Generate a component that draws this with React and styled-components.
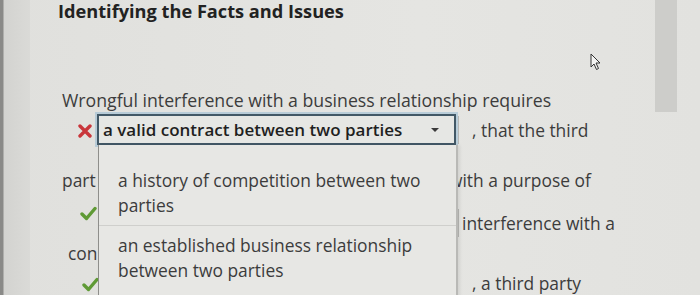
import React from 'react'
import styled, { createGlobalStyle } from 'styled-components'

const Global = createGlobalStyle`
    body {
        margin: 0;
        background: #e3e3e0;
        font-family: "Open Sans", "Liberation Sans", sans-serif;
    }
`;

export default function App() {
    return (
        <Screen>
            <Global />
            <Bezel />
            <Main>
                <Title>Identifying the Facts and Issues</Title>
                <Question>Wrongful interference with a business relationship requires</Question>
                <AnswerRow>
                    <Mark>
                        <svg width="14" height="14" viewBox="0 0 14 14">
                            <path d="M2 2 L12 12 M12 2 L2 12" stroke="#c9363b" strokeWidth="3.4" strokeLinecap="round" />
                        </svg>
                    </Mark>
                    <SelectWrap>
                        <SelectBox>
                            a valid contract between two parties
                            <Caret />
                        </SelectBox>
                        <Options>
                            <Option>a history of competition between two parties</Option>
                            <Option>an established business relationship between two parties</Option>
                        </Options>
                    </SelectWrap>
                    <Stub />
                    <Tail>, that the third</Tail>
                </AnswerRow>
                <Below>
                    <LeftCol>
                        <Word>part</Word>
                        <Check $left={18} $top={13} />
                        <Word $left={6} $top={20}>con</Word>
                        <Check $left={20} $top={11} />
                    </LeftCol>
                    <RightCol>
                        <Word>with a purpose of</Word>
                        <Blank $top={16}>
                            <Stub />
                            interference with a
                        </Blank>
                        <Word $left={23} $top={34}>, a third party</Word>
                    </RightCol>
                </Below>
                <Cursor>
                    <svg width="11" height="18" viewBox="0 0 11 18">
                        <path d="M1 1 L1 14 L4 11 L6.5 16.5 L8.5 15.5 L6 10 L10 10 Z" fill="#f4f4f2" stroke="#333" strokeWidth="1" strokeLinejoin="round" />
                    </svg>
                </Cursor>
            </Main>
            <ScrollTrack>
                <Thumb />
            </ScrollTrack>
        </Screen>
    )
}

function Check({ $left, $top }) {
    return (
        <CheckBox $left={$left} $top={$top}>
            <svg width="17" height="15" viewBox="0 0 17 15">
                <path d="M2 8 L6.5 12.5 L15 2.5" fill="none" stroke="#5f9a35" strokeWidth="3.4" strokeLinecap="round" strokeLinejoin="round" />
            </svg>
        </CheckBox>
    )
}

const Screen = styled.div`
    width: 700px;
    height: 295px;
    overflow: hidden;
    display: flex;
    background: linear-gradient(to right, #e0e0dd, #e5e5e2 60%, #e2e2df);
`;

const Bezel = styled.div`
    width: 30px;
    flex-shrink: 0;
    background: linear-gradient(to right, #8a8a88 0, #8a8a88 3px, #d3d3d0 4px, #dadad7 100%);
`;

const Main = styled.div`
    flex: 1;
    padding-left: 28px;
    position: relative;
    color: #3c3c3c;
`;

const Title = styled.h1`
    margin: 1px 0 0;
    font-size: 18.2px;
    line-height: 21px;
    font-weight: 700;
    color: #222;
`;

const Question = styled.p`
    margin: 67px 0 0 4px;
    font-size: 17.7px;
    line-height: 22px;
`;

const AnswerRow = styled.div`
    display: flex;
    align-items: center;
    margin: 3px 0 0 20px;
    height: 31px;
`;

const Mark = styled.span`
    width: 14px;
    height: 14px;
    display: flex;
    margin-right: 5px;
    margin-top: 2px;
`;

const SelectWrap = styled.div`
    position: relative;
    z-index: 2;
`;

const SelectBox = styled.div`
    width: 359px;
    height: 31px;
    box-sizing: border-box;
    display: flex;
    align-items: center;
    padding: 0 0 0 4px;
    border: 2px solid #425866;
    box-shadow: 0 0 0 2px rgba(150, 185, 210, 0.55);
    background: #e6e7e4;
    font-size: 17px;
    font-weight: 600;
    color: #1f1f1f;
    white-space: nowrap;
`;

const Caret = styled.span`
    margin-left: auto;
    margin-right: 15px;
    width: 0;
    height: 0;
    border-left: 4px solid transparent;
    border-right: 4px solid transparent;
    border-top: 4px solid #3a3a3a;
`;

const Options = styled.div`
    position: absolute;
    top: 100%;
    left: 1px;
    width: 360px;
    height: 160px;
    box-sizing: border-box;
    background: #e7e7e4;
    border-left: 1px solid #8e8e8b;
    border-right: 2px solid #b9b9b6;
    box-shadow: 2px 0 3px rgba(0, 0, 0, 0.08);
    padding-top: 23px;
`;

const Option = styled.div`
    padding: 0 18px 7px 19px;
    font-size: 17.4px;
    line-height: 25px;
    & + & {
        border-top: 1px solid #cfcfcc;
        padding-top: 7px;
    }
`;

const Stub = styled.span`
    width: 1px;
    height: 28px;
    margin-left: 2px;
    background: #b8b8b5;
    flex-shrink: 0;
`;

const Tail = styled.span`
    margin-left: 13px;
    font-size: 17.4px;
    line-height: 25px;
    margin-top: 2px;
`;

const Below = styled.div`
    display: grid;
    grid-template-columns: 387px 1fr;
    padding-left: 4px;
`;

const LeftCol = styled.div`
    display: flex;
    flex-direction: column;
    align-items: flex-start;
`;

const RightCol = styled.div`
    display: flex;
    flex-direction: column;
    align-items: flex-start;
`;

const Word = styled.div`
    font-size: 17.4px;
    line-height: 25px;
    margin-top: ${p => p.$top ?? 23}px;
    padding-left: ${p => p.$left ?? 0}px;
    white-space: nowrap;
`;

const Blank = styled.div`
    display: flex;
    align-items: center;
    gap: 3px;
    margin-top: ${p => p.$top}px;
    padding-left: 7px;
    font-size: 17.4px;
    line-height: 25px;
    white-space: nowrap;
`;

const CheckBox = styled.span`
    display: flex;
    margin-top: ${p => p.$top}px;
    margin-left: ${p => p.$left}px;
`;

const Cursor = styled.span`
    position: absolute;
    left: 560px;
    top: 53px;
    display: flex;
`;

const ScrollTrack = styled.div`
    width: 45px;
    flex-shrink: 0;
`;

const Thumb = styled.div`
    width: 22px;
    height: 112px;
    background: #cdcdca;
`;
